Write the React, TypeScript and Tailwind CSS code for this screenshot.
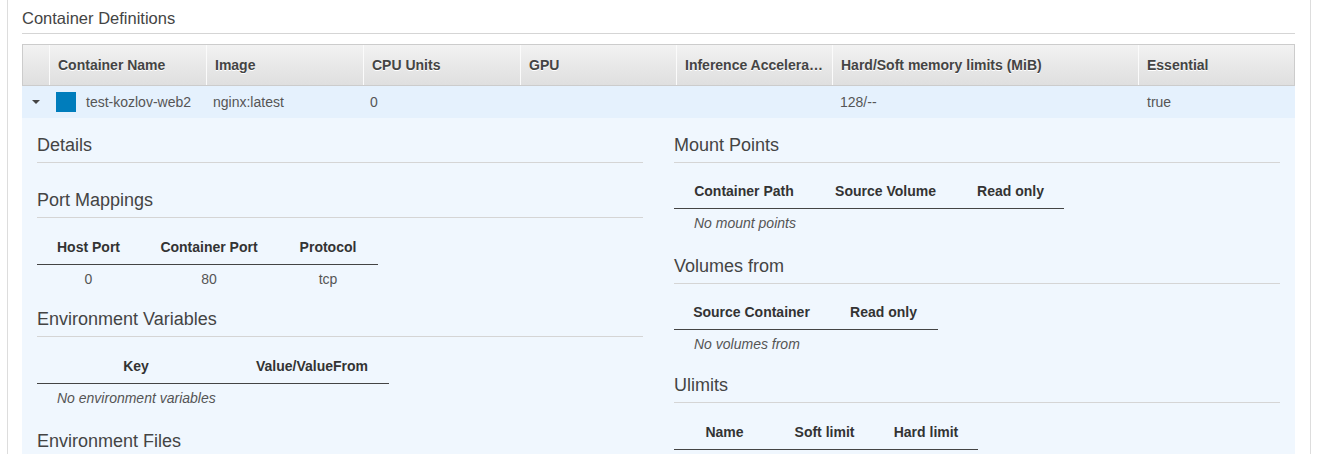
import React from 'react';

type Col = { label: string; width: number };

const mainCols: { label: string; cls: string }[] = [
  { label: '', cls: 'w-[26px]' },
  { label: 'Container Name', cls: 'w-[157px]' },
  { label: 'Image', cls: 'w-[157px]' },
  { label: 'CPU Units', cls: 'w-[157px]' },
  { label: 'GPU', cls: 'w-[156px]' },
  { label: 'Inference Accelera…', cls: 'w-[156px]' },
  { label: 'Hard/Soft memory limits (MiB)', cls: 'flex-1' },
  { label: 'Essential', cls: 'w-[156px]' },
];

function Heading({ children, className = '' }: { children: React.ReactNode; className?: string }) {
  return (
    <div className={`border-b border-[#d5d5d5] pb-[5px] text-[18px] leading-[24px] text-[#444] ${className}`}>
      {children}
    </div>
  );
}

function SubTable({
  cols,
  rows,
  empty,
  className = 'mt-[13px]',
}: {
  cols: Col[];
  rows?: string[][];
  empty?: string;
  className?: string;
}) {
  return (
    <table className={`${className} border-collapse text-[14px] text-[#444]`}>
      <thead>
        <tr>
          {cols.map((c) => (
            <th
              key={c.label}
              style={{ width: c.width }}
              className="h-[32px] border-b border-[#444] px-0 text-center font-bold text-[#333]"
            >
              {c.label}
            </th>
          ))}
        </tr>
      </thead>
      <tbody>
        {rows ? (
          rows.map((r, i) => (
            <tr key={i}>
              {r.map((v, j) => (
                <td key={j} className="h-[31px] text-center text-[#555]">
                  {v}
                </td>
              ))}
            </tr>
          ))
        ) : empty ? (
          <tr>
            <td colSpan={cols.length} className="h-[31px] pl-[20px] text-left italic text-[#555]">
              {empty}
            </td>
          </tr>
        ) : null}
      </tbody>
    </table>
  );
}

export default function App() {
  return (
    <div className="h-[454px] overflow-hidden bg-white font-['Liberation_Sans',Arial,sans-serif]">
      <div className="ml-[7px] h-full w-[1304px] border-x border-[#dddddd] pl-[14px] pr-[15px]">
        <div className="border-b border-[#d5d5d5] pt-[6px] pb-[3px] text-[16.5px] leading-[24px] text-[#444]">
          Container Definitions
        </div>

        <div className="mt-[10px]">
          {/* header */}
          <div className="flex h-[42px] border border-[#cccccc] bg-linear-to-b from-[#f2f2f2] to-[#dfdfdf] text-[14px] font-bold text-[#444] [text-shadow:0_1px_0_#fff]">
            {mainCols.map((c, i) => (
              <div
                key={i}
                className={`${c.cls} flex items-center truncate whitespace-nowrap pl-[8px] ${i > 0 ? 'border-l border-[#fbfbfb]' : ''}`}
              >
                {c.label}
              </div>
            ))}
          </div>

          {/* selected row */}
          <div className="flex h-[32px] items-center bg-[#e5f1fd] text-[14px] text-[#555]">
            <div className="flex w-[26px] justify-center pl-[1px]">
              <span className="h-0 w-0 border-x-[4px] border-t-[4px] border-x-transparent border-t-[#444]" />
            </div>
            <div className="flex w-[157px] items-center pl-[8px]">
              <span className="mr-[10px] h-[20px] w-[20px] bg-[#007dbc]" />
              test-kozlov-web2
            </div>
            <div className="w-[157px] pl-[8px]">nginx:latest</div>
            <div className="w-[157px] pl-[8px]">0</div>
            <div className="w-[156px]" />
            <div className="w-[156px]" />
            <div className="flex-1 pl-[9px]">128/--</div>
            <div className="w-[156px] pl-[8px]">true</div>
          </div>

          {/* expanded details */}
          <div className="grid grid-cols-2 gap-x-[31px] bg-[#f0f7fe] px-[15px] pb-10">
            <div>
              <Heading className="mt-[15px]">Details</Heading>
              <Heading className="mt-[25px]">Port Mappings</Heading>
              <SubTable
                className="mt-[14px]"
                cols={[
                  { label: 'Host Port', width: 103 },
                  { label: 'Container Port', width: 138 },
                  { label: 'Protocol', width: 100 },
                ]}
                rows={[['0', '80', 'tcp']]}
              />
              <Heading className="mt-[12px]">Environment Variables</Heading>
              <SubTable
                className="mt-[14px]"
                cols={[
                  { label: 'Key', width: 198 },
                  { label: 'Value/ValueFrom', width: 154 },
                ]}
                empty="No environment variables"
              />
              <Heading className="mt-[15px]">Environment Files</Heading>
            </div>
            <div>
              <Heading className="mt-[15px]">Mount Points</Heading>
              <SubTable
                cols={[
                  { label: 'Container Path', width: 140 },
                  { label: 'Source Volume', width: 143 },
                  { label: 'Read only', width: 107 },
                ]}
                empty="No mount points"
              />
              <Heading className="mt-[15px]">Volumes from</Heading>
              <SubTable
                cols={[
                  { label: 'Source Container', width: 155 },
                  { label: 'Read only', width: 109 },
                ]}
                empty="No volumes from"
              />
              <Heading className="mt-[13px]">Ulimits</Heading>
              <SubTable
                className="mt-[14px]"
                cols={[
                  { label: 'Name', width: 101 },
                  { label: 'Soft limit', width: 99 },
                  { label: 'Hard limit', width: 104 },
                ]}
              />
            </div>
          </div>
        </div>
      </div>
    </div>
  );
}
